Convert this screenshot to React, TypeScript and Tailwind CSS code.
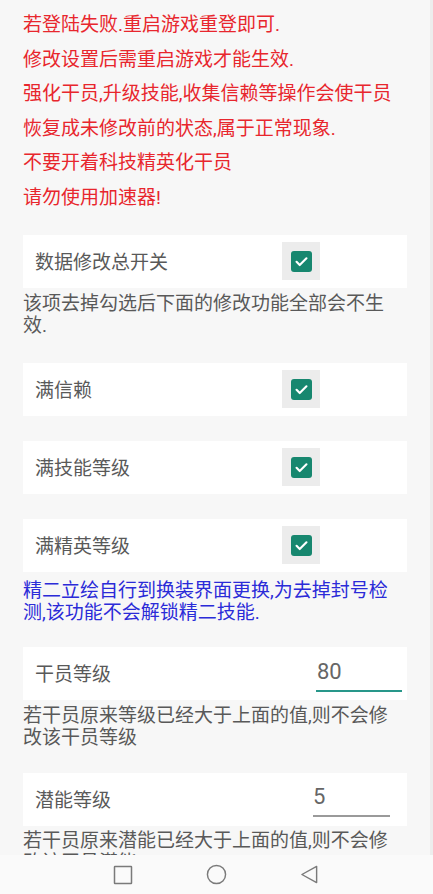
import React from "react";

const warnings = [
  "若登陆失败.重启游戏重登即可.",
  "修改设置后需重启游戏才能生效.",
  "强化干员,升级技能,收集信赖等操作会使干员",
  "恢复成未修改前的状态,属于正常现象.",
  "不要开着科技精英化干员",
  "请勿使用加速器!",
];

function CheckRow({ label, className = "" }: { label: string; className?: string }) {
  return (
    <div className={`mx-[23px] flex h-[53px] items-center bg-white pl-[12px] ${className}`}>
      <span className="w-[247px] pt-[4px] text-[19px] text-[#595959]">{label}</span>
      <div className="flex h-[38px] w-[38px] items-center justify-center bg-[#ececec]">
        <div className="flex h-[21px] w-[21px] items-center justify-center rounded-[3px] bg-[#17876f]">
          <svg viewBox="0 0 24 24" className="h-[17px] w-[17px]" fill="none" stroke="white" strokeWidth={3} strokeLinecap="round" strokeLinejoin="round">
            <path d="M5 12.5l4.5 4.5L19 7.5" />
          </svg>
        </div>
      </div>
    </div>
  );
}

function NumberRow({
  label,
  value,
  focused,
  className = "",
}: {
  label: string;
  value: string;
  focused?: boolean;
  className?: string;
}) {
  return (
    <div className={`mx-[23px] flex h-[53px] items-center justify-between bg-white pl-[12px] ${className}`}>
      <span className="pt-[4px] text-[19px] text-[#595959]">{label}</span>
      {focused ? (
        <div className="mr-[5px] flex h-[53px] w-[86px] flex-col justify-end pb-[8px]">
          <span className="pl-[1px] text-[22px] leading-[28px] text-[#666]">{value}</span>
          <div className="mt-[4px] h-[2px] bg-[#28978a]" />
        </div>
      ) : (
        <div className="mr-[17px] flex h-[53px] w-[77px] flex-col justify-end pb-[9px]">
          <span className="text-[22px] leading-[28px] text-[#666]">{value}</span>
          <div className="mt-[4px] h-[1.5px] bg-[#9a9a9a]" />
        </div>
      )}
    </div>
  );
}

function Note({ children, className = "" }: { children: React.ReactNode; className?: string }) {
  return (
    <p className={`pl-[23px] pr-[32px] text-[19px] leading-[22px] text-[#595959] ${className}`}>
      {children}
    </p>
  );
}

export default function App() {
  return (
    <div
      className="flex h-[894px] w-[433px] flex-col overflow-hidden bg-[#f7f7f7]"
      style={{ fontFamily: "Roboto, 'Noto Sans CJK SC', sans-serif" }}
    >
      <div className="min-h-0 flex-1 overflow-hidden border-r-[3px] border-[#ededed]">
        <div className="px-[23px] pt-[8px]">
          {warnings.map((line) => (
            <p key={line} className="text-[19px] leading-[34.6px] text-[#e8262d]">
              {line}
            </p>
          ))}
        </div>

        <CheckRow label="数据修改总开关" className="mt-[19px]" />
        <Note className="mt-[5px]">该项去掉勾选后下面的修改功能全部会不生效.</Note>

        <CheckRow label="满信赖" className="mt-[26px]" />
        <CheckRow label="满技能等级" className="mt-[25px]" />
        <CheckRow label="满精英等级" className="mt-[25px]" />
        <p className="mt-[8px] pl-[23px] pr-[32px] text-[19px] leading-[22px] text-[#2b2bd8]">
          精二立绘自行到换装界面更换,为去掉封号检测,该功能不会解锁精二技能.
        </p>

        <NumberRow label="干员等级" value="80" focused className="mt-[23px]" />
        <Note className="mt-[5px]">若干员原来等级已经大于上面的值,则不会修改该干员等级</Note>

        <NumberRow label="潜能等级" value="5" className="mt-[24px]" />
        <Note className="mt-[4px]">若干员原来潜能已经大于上面的值,则不会修改该干员潜能</Note>
      </div>

      <nav className="flex h-[39px] shrink-0 items-center justify-center gap-[73px] bg-[#fafafa] pr-[2px]">
        <svg viewBox="0 0 20 20" className="h-[20px] w-[20px]" fill="none" stroke="#7a7a7a" strokeWidth={1.5}>
          <rect x="1.5" y="1.5" width="17" height="17" rx="0.5" />
        </svg>
        <svg viewBox="0 0 22 22" className="h-[21px] w-[21px]" fill="none" stroke="#7a7a7a" strokeWidth={1.5}>
          <circle cx="11" cy="11" r="9.5" />
        </svg>
        <svg viewBox="0 0 20 20" className="h-[19px] w-[19px]" fill="none" stroke="#7a7a7a" strokeWidth={1.5} strokeLinejoin="round">
          <path d="M17.5 1.5v17L2 10z" />
        </svg>
      </nav>
    </div>
  );
}
